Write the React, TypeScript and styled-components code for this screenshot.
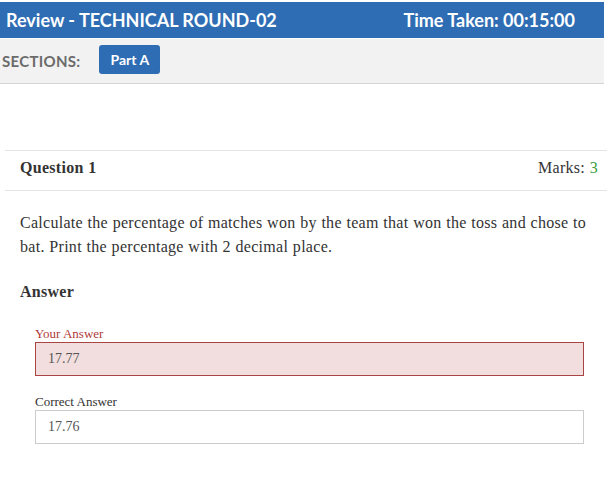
import React from "react"
import styled, { createGlobalStyle } from "styled-components"

const GlobalStyle = createGlobalStyle`
  body {
    margin: 0;
    background: #fff;
    font-family: "Liberation Serif", "Times New Roman", serif;
  }
`

const Page = styled.div`
  width: 604px;
  padding-top: 2px;
`

const TopBar = styled.div`
  display: flex;
  align-items: center;
  justify-content: space-between;
  height: 36px;
  padding: 0 29px 0 6px;
  background-color: #2e6db4;
  color: #fff;
  font-family: Lato, "Open Sans", sans-serif;
  font-weight: 700;
  font-size: 18px;
`

const SectionBar = styled.div`
  display: flex;
  align-items: center;
  gap: 19px;
  height: 44px;
  margin-top: 1px;
  padding-left: 2px;
  background-color: #f2f2f2;
  border-bottom: 1px solid #d6d6d6;
`

const SectionLabel = styled.span`
  color: #6b6b6b;
  font-family: Lato, "Open Sans", sans-serif;
  font-weight: 700;
  font-size: 15px;
  letter-spacing: 0.3px;
`

const SectionButton = styled.button`
  align-self: flex-start;
  margin-top: 6px;
  height: 29px;
  padding: 0 11px;
  border: none;
  border-radius: 3px;
  background-color: #2e6db4;
  color: #fff;
  font-family: Lato, "Open Sans", sans-serif;
  font-weight: 700;
  font-size: 14px;
`

const Card = styled.div`
  margin: 66px -3px 0 5px;
  letter-spacing: 0.28px;
  word-spacing: 0.4px;
`

const CardHeader = styled.div`
  display: flex;
  align-items: center;
  justify-content: space-between;
  box-sizing: border-box;
  height: 41px;
  padding: 0 9px 5px 15px;
  border-top: 1px solid #e3e3e3;
  border-bottom: 1px solid #e3e3e3;
  color: #333;
  font-size: 16px;
`

const QuestionTitle = styled.span`
  font-weight: 700;
`

const Marks = styled.span`
  color: #333;
`

const MarksValue = styled.span`
  color: #3c9d3c;
`

const Body = styled.div`
  padding: 20px 12px 0 15px;
  color: #333;
`

const QuestionText = styled.p`
  margin: 0;
  font-size: 16px;
  line-height: 24px;
`

const AnswerHeading = styled.h4`
  margin: 21px 0 0;
  font-size: 16px;
  font-weight: 700;
  line-height: 24px;
`

const AnswerBlock = styled.div`
  margin: 22px 0 0 30px;
  width: 549px;
  letter-spacing: 0;
  word-spacing: 0;
  & + & {
    margin-top: 18px;
  }
`

const FieldLabel = styled.div<{ $error?: boolean }>`
  color: ${(p) => (p.$error ? "#b03a3a" : "#333")};
  font-size: 13px;
  line-height: 16px;
`

const FieldBox = styled.div<{ $error?: boolean }>`
  box-sizing: border-box;
  display: flex;
  align-items: center;
  height: 34px;
  padding: 0 12px;
  border: 1px solid ${(p) => (p.$error ? "#a94442" : "#cccccc")};
  background-color: ${(p) => (p.$error ? "#f2dede" : "#fff")};
  color: #555;
  font-size: 14px;
`

export default function App() {
  return (
    <Page>
      <GlobalStyle />
      <TopBar>
        <span>Review - TECHNICAL ROUND-02</span>
        <span>Time Taken: 00:15:00</span>
      </TopBar>
      <SectionBar>
        <SectionLabel>SECTIONS:</SectionLabel>
        <SectionButton>Part A</SectionButton>
      </SectionBar>
      <Card>
        <CardHeader>
          <QuestionTitle>Question 1</QuestionTitle>
          <Marks>
            Marks: <MarksValue>3</MarksValue>
          </Marks>
        </CardHeader>
        <Body>
          <QuestionText>
            Calculate the percentage of matches won by the team that won the toss and chose to
            bat. Print the percentage with 2 decimal place.
          </QuestionText>
          <AnswerHeading>Answer</AnswerHeading>
        </Body>
        <AnswerBlock>
          <FieldLabel $error>Your Answer</FieldLabel>
          <FieldBox $error>17.77</FieldBox>
        </AnswerBlock>
        <AnswerBlock>
          <FieldLabel>Correct Answer</FieldLabel>
          <FieldBox>17.76</FieldBox>
        </AnswerBlock>
      </Card>
    </Page>
  )
}
